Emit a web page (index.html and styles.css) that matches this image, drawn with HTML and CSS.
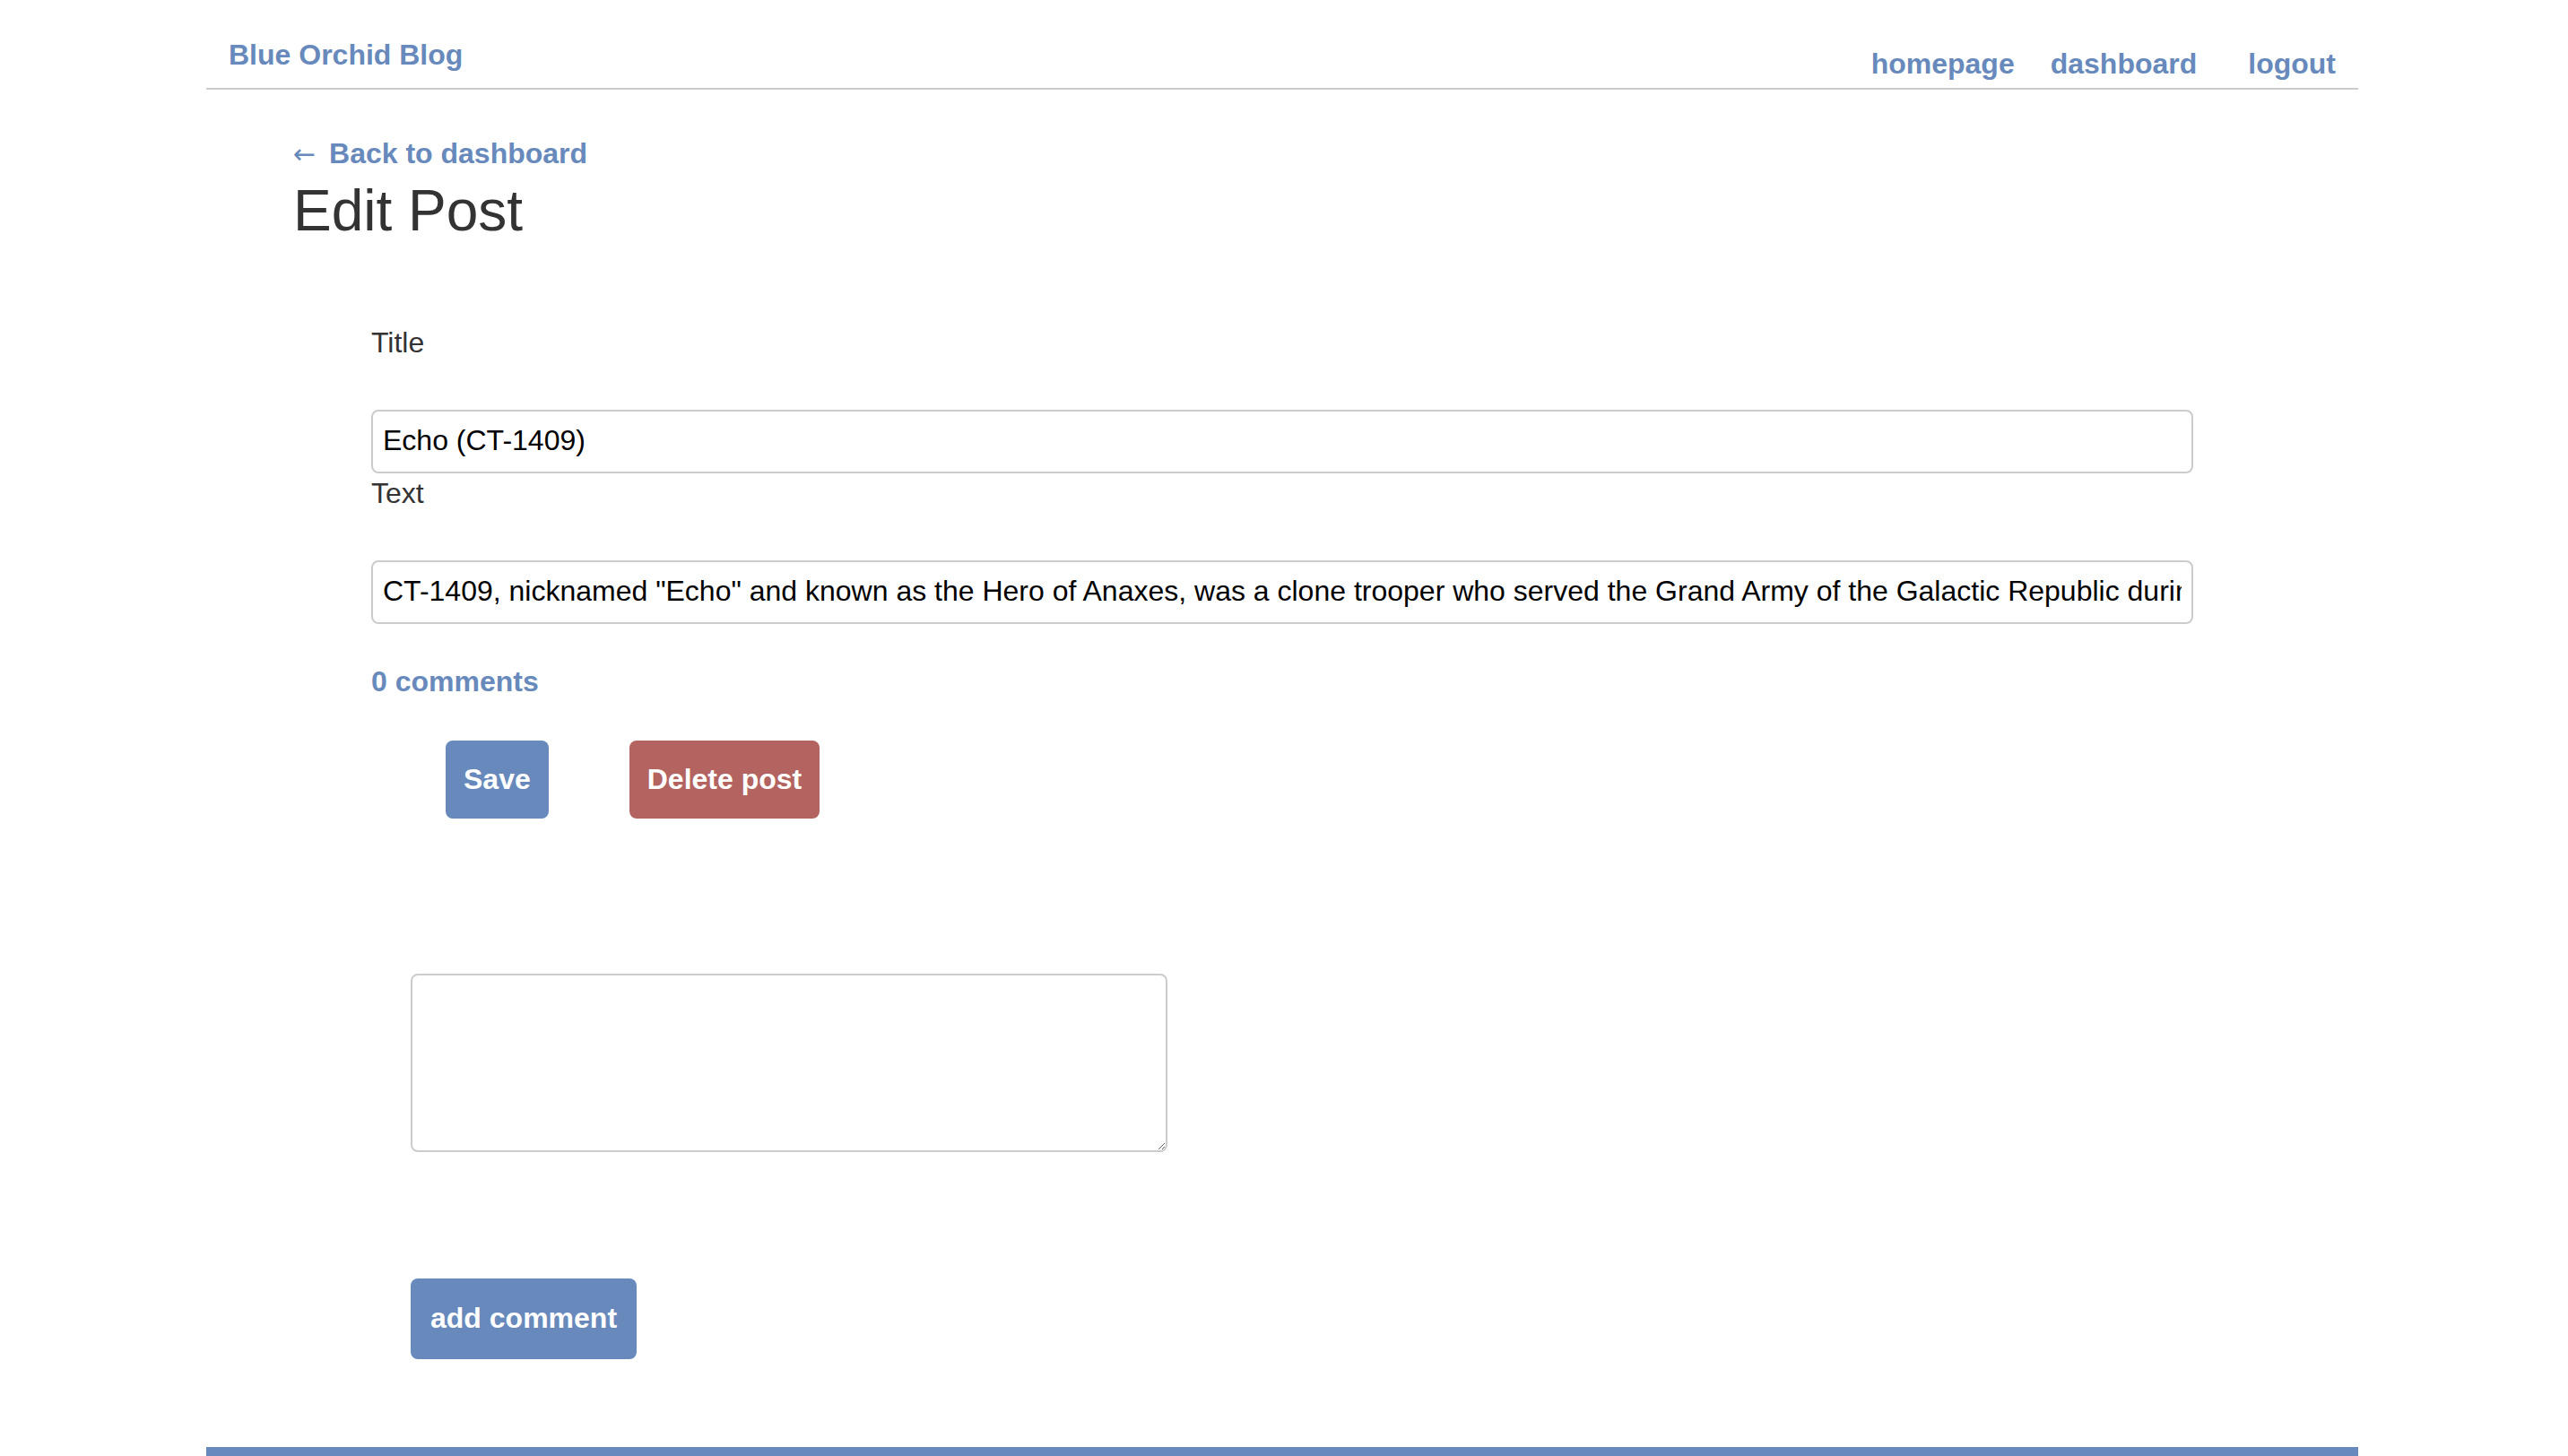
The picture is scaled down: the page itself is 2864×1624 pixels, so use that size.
FILE: index.html
```html
<!DOCTYPE html>
<html lang="en">
<head>
<meta charset="utf-8">
<title>Edit Post - Blue Orchid Blog</title>
<link rel="stylesheet" href="styles.css">
</head>
<body>
<div class="page">
  <header class="site-header">
    <a class="brand" href="#">Blue Orchid Blog</a>
    <nav class="nav">
      <a class="nav-link" href="#">homepage</a>
      <a class="nav-link nav-dash" href="#">dashboard</a>
      <a class="nav-link nav-logout" href="#">logout</a>
    </nav>
  </header>

  <main class="content">
    <a class="back-link" href="#"><span class="arrow">&larr;</span> Back to dashboard</a>
    <h1 class="page-title">Edit Post</h1>

    <form class="edit-form">
      <label class="field-label" for="title">Title</label>
      <input class="field-input" id="title" type="text" value="Echo (CT-1409)">
      <label class="field-label field-label-second" for="text">Text</label>
      <input class="field-input" id="text" type="text" value="CT-1409, nicknamed &quot;Echo&quot; and known as the Hero of Anaxes, was a clone trooper who served the Grand Army of the Galactic Republic during the Clone Wars.">

      <a class="comments-link" href="#">0 comments</a>

      <div class="actions">
        <button class="btn btn-blue" type="button">Save</button>
        <button class="btn btn-red" type="button">Delete post</button>
      </div>

      <div class="comment-box">
        <textarea class="comment-input"></textarea>
        <button class="btn btn-blue btn-comment" type="button">add comment</button>
      </div>
    </form>
  </main>

  <footer class="site-footer"></footer>
</div>
</body>
</html>
```

FILE: styles.css
```css
html, body {
  margin: 0;
  padding: 0;
  background: #ffffff;
}

body {
  font-family: "Liberation Sans", Arial, Helvetica, sans-serif;
  font-size: 32px;
  color: #333333;
}

a {
  text-decoration: none;
  color: #6789bb;
  font-weight: 700;
}

.page {
  width: 2400px;
  margin-left: 230px;
}

.site-header {
  display: flex;
  justify-content: space-between;
  align-items: flex-start;
  height: 98px;
  border-bottom: 2px solid #cccccc;
}

.brand {
  padding: 43px 0 0 25px;
  line-height: 36px;
}

.nav {
  display: flex;
  padding: 53px 25px 0 0;
  line-height: 36px;
}

.nav-dash {
  margin-left: 40px;
}

.nav-logout {
  margin-left: 57px;
}

.content {
  padding-left: 97px;
}

.back-link {
  display: block;
  height: 36px;
  margin-top: 53px;
  line-height: 36px;
  width: max-content;
}

.arrow {
  font-family: "DejaVu Sans", sans-serif;
  font-weight: 400;
  font-size: 30px;
  line-height: 0;
  margin-right: 6px;
}

.page-title {
  margin: 9px 0 0;
  font-size: 64px;
  line-height: 74px;
  font-weight: 400;
  color: #333333;
}

.edit-form {
  margin: 92px 0 0 87px;
}

.field-label {
  display: block;
  line-height: 36px;
  margin-bottom: 57px;
  color: #333333;
}

.field-label-second {
  margin-top: 4px;
}

.field-input {
  display: block;
  box-sizing: border-box;
  width: 2032px;
  height: 71px;
  padding: 15px 11px 17px;
  border: 2px solid #cccccc;
  border-radius: 8px;
  font-family: "Liberation Sans", Arial, Helvetica, sans-serif;
  font-size: 32px;
  line-height: 35px;
  color: #000000;
  background: #ffffff;
  outline: none;
}

.comments-link {
  display: block;
  width: max-content;
  margin-top: 46px;
  line-height: 36px;
}

.actions {
  display: flex;
  gap: 90px;
  margin-top: 48px;
  padding-left: 83px;
}

.btn {
  border: none;
  border-radius: 8px;
  padding: 25px 20px;
  font-family: "Liberation Sans", Arial, Helvetica, sans-serif;
  font-size: 32px;
  font-weight: 700;
  line-height: 37px;
  color: #ffffff;
  cursor: pointer;
}

.btn-blue {
  background: #6789bb;
}

.btn-red {
  background: #b36360;
}

.comment-box {
  padding-left: 44px;
}

.comment-input {
  display: block;
  box-sizing: border-box;
  width: 844px;
  height: 199px;
  margin-top: 173px;
  border: 2px solid #cccccc;
  border-radius: 8px;
  background: #ffffff;
  font-family: "Liberation Sans", Arial, sans-serif;
  font-size: 32px;
}

.btn-comment {
  display: block;
  margin-top: 141px;
  padding: 26px 22px 27px;
}

.site-footer {
  margin-top: 98px;
  height: 80px;
  background: #6789bb;
}
```
